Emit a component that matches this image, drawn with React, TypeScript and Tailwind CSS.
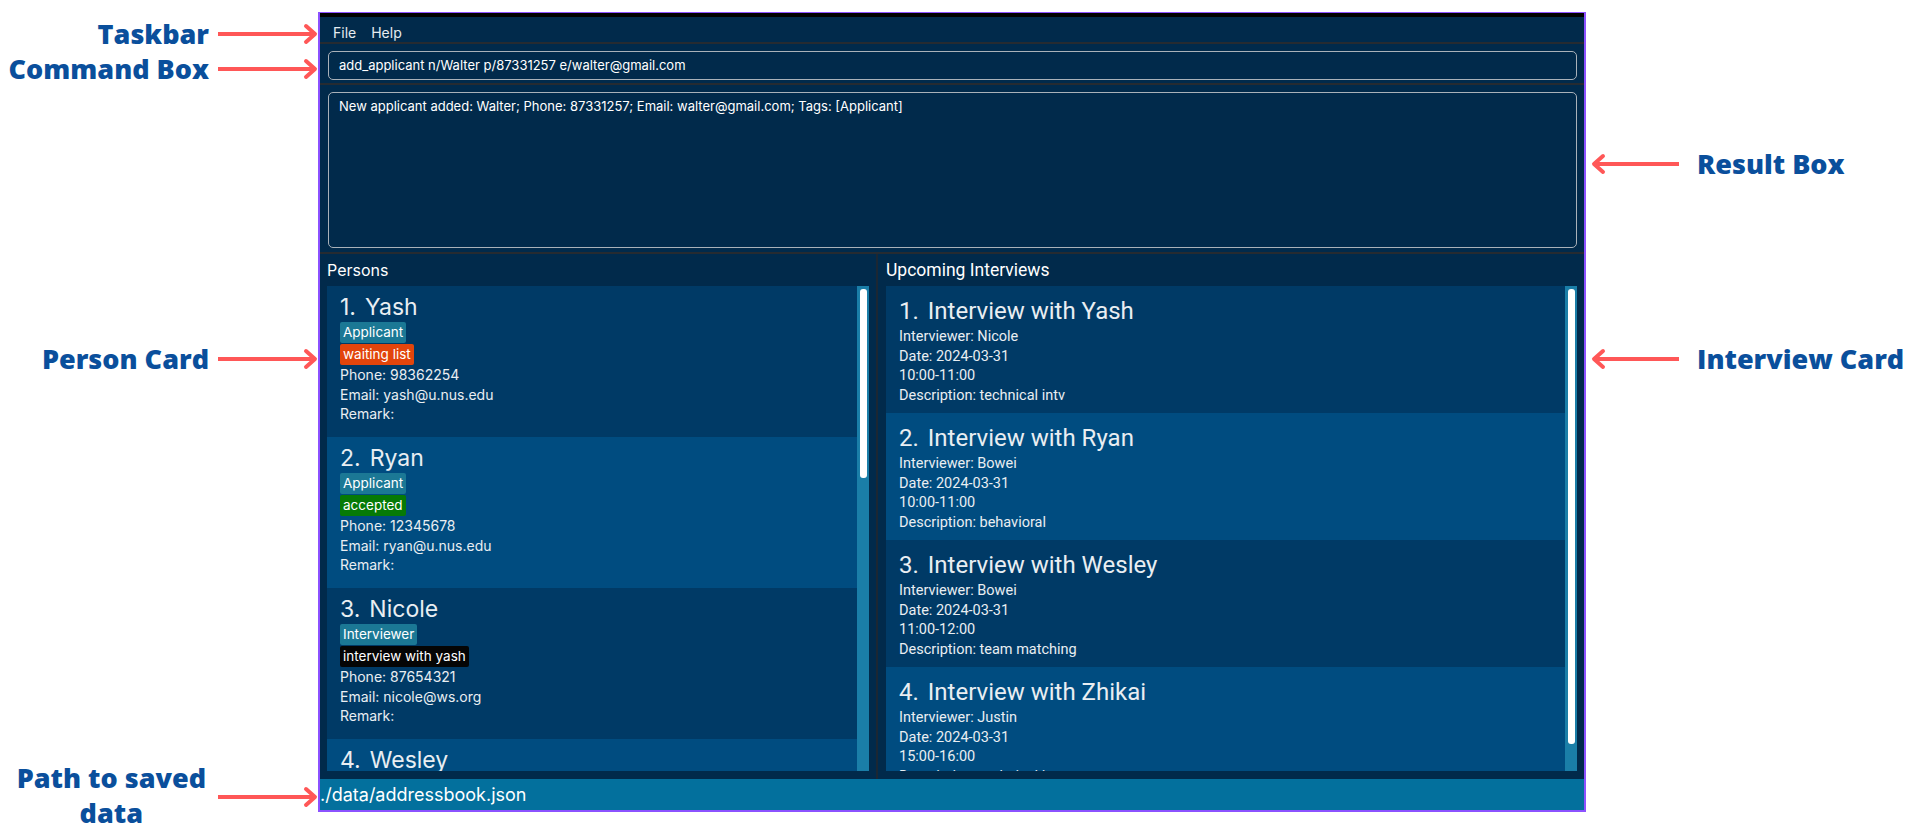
import React from "react";

const ui = { fontFamily: "Inter, 'Noto Sans', sans-serif" };
const cond = { fontFamily: "Roboto, 'Noto Sans', sans-serif" };
const ann = { fontFamily: "'Open Sans', 'Noto Sans', sans-serif" };

function ArrowRight({ w }: { w: number }) {
  return (
    <svg width={w} height="22" viewBox={`0 0 ${w} 22`}>
      <line x1="0" y1="11" x2={w - 3} y2="11" stroke="#ff5757" strokeWidth="4" />
      <polyline points={`${w - 12},3 ${w - 3},11 ${w - 12},19`} fill="none" stroke="#ff5757" strokeWidth="4" strokeLinecap="round" strokeLinejoin="round" />
    </svg>
  );
}
function ArrowLeft({ w }: { w: number }) {
  return (
    <svg width={w} height="22" viewBox={`0 0 ${w} 22`}>
      <line x1="3" y1="11" x2={w} y2="11" stroke="#ff5757" strokeWidth="4" />
      <polyline points="12,3 3,11 12,19" fill="none" stroke="#ff5757" strokeWidth="4" strokeLinecap="round" strokeLinejoin="round" />
    </svg>
  );
}

function LeftLabel({ top, children }: { top: number; children: React.ReactNode }) {
  return (
    <div className="absolute right-0 flex items-center" style={{ top }}>
      <div className="text-right text-[27px] font-extrabold leading-[34px] text-[#0a4f9c]" style={ann}>{children}</div>
      <div className="ml-[9px]"><ArrowRight w={100} /></div>
    </div>
  );
}
function RightLabel({ top, children }: { top: number; children: React.ReactNode }) {
  return (
    <div className="absolute left-0 flex items-center" style={{ top }}>
      <div className="ml-[5px]"><ArrowLeft w={88} /></div>
      <div className="ml-[18px] text-[27px] font-extrabold leading-[34px] text-[#0a4f9c]" style={ann}>{children}</div>
    </div>
  );
}

type Tag = { t: string; c: string };
type Person = { n: string; tags: Tag[]; phone: string; email: string };

const persons: Person[] = [
  { n: "Yash", tags: [{ t: "Applicant", c: "bg-[#1b7895]" }, { t: "waiting list", c: "bg-[#e2450c]" }], phone: "98362254", email: "yash@u.nus.edu" },
  { n: "Ryan", tags: [{ t: "Applicant", c: "bg-[#1b7895]" }, { t: "accepted", c: "bg-[#067a06]" }], phone: "12345678", email: "ryan@u.nus.edu" },
  { n: "Nicole", tags: [{ t: "Interviewer", c: "bg-[#1b7895]" }, { t: "interview with yash", c: "bg-[#050505]" }], phone: "87654321", email: "nicole@ws.org" },
  { n: "Wesley", tags: [{ t: "Interviewer", c: "bg-[#1b7895]" }], phone: "11112222", email: "wesley@ws.org" },
];

const interviews = [
  { n: "Yash", by: "Nicole", time: "10:00-11:00", d: "technical intv" },
  { n: "Ryan", by: "Bowei", time: "10:00-11:00", d: "behavioral" },
  { n: "Wesley", by: "Bowei", time: "11:00-12:00", d: "team matching" },
  { n: "Zhikai", by: "Justin", time: "15:00-16:00", d: "technical intv" },
];

function PersonCard({ p, i }: { p: Person; i: number }) {
  return (
    <div className={`h-[151px] shrink-0 pl-[13px] pt-[7px] text-[#e9eef2] ${i % 2 === 0 ? "bg-[#003a66]" : "bg-[#004c80]"}`} style={ui}>
      <div className="flex h-[28px] items-center gap-[9px] text-[23px]">
        <span>{i + 1}.</span>
        <span>{p.n}</span>
      </div>
      <div className="flex flex-col items-start gap-[1px] pt-[1px]">
        {p.tags.map((t) => (
          <span key={t.t} className={`h-[21px] rounded-[2px] px-[3px] text-[13.5px] leading-[21px] text-white ${t.c}`}>{t.t}</span>
        ))}
      </div>
      <div className="text-[14px] leading-[19.5px]">
        <div>Phone: {p.phone}</div>
        <div>Email: {p.email}</div>
        <div>Remark:</div>
      </div>
    </div>
  );
}

function InterviewCard({ v, i }: { v: (typeof interviews)[number]; i: number }) {
  return (
    <div className={`h-[127px] shrink-0 pl-[13px] pt-[9px] text-[#e9eef2] ${i % 2 === 0 ? "bg-[#003a66]" : "bg-[#004c80]"}`} style={cond}>
      <div className="flex h-[32px] items-center gap-[9px] text-[24px]">
        <span>{i + 1}.</span>
        <span>Interview with {v.n}</span>
      </div>
      <div className="text-[14.5px] leading-[19.5px]">
        <div>Interviewer: {v.by}</div>
        <div>Date: 2024-03-31</div>
        <div>{v.time}</div>
        <div>Description: {v.d}</div>
      </div>
    </div>
  );
}

function Scrollbar({ thumb }: { thumb: number }) {
  return (
    <div className="w-[12px] shrink-0 bg-[#1a7ea8] pt-[3px]">
      <div className="mx-auto w-[7px] rounded-[3px] bg-white" style={{ height: thumb }} />
    </div>
  );
}

export default function App() {
  return (
    <div className="flex h-[839px] w-[1906px] overflow-hidden bg-white">
      <div className="relative w-[318px] shrink-0">
        <LeftLabel top={17}>Taskbar</LeftLabel>
        <LeftLabel top={52}>Command Box</LeftLabel>
        <LeftLabel top={342}>Person Card</LeftLabel>
        <div className="absolute right-0 top-[760px] flex items-center">
          <div className="text-center text-[27px] font-extrabold leading-[35px] text-[#0a4f9c]" style={ann}>
            Path to saved<br />data
          </div>
          <div className="ml-[12px] mt-[4px]"><ArrowRight w={100} /></div>
        </div>
      </div>

      <div className="mt-[12px] flex h-[800px] w-[1268px] shrink-0 flex-col border-2 border-t-[1px] border-[#8c52ff] bg-[#012a4b]">
        <div className="h-[4px] bg-black" />
        <div className="flex h-[25px] items-center gap-[15px] pl-[13px] pt-[5px] text-[14px] text-[#e6ecf0]" style={ui}>
          <span>File</span>
          <span>Help</span>
        </div>
        <div className="h-[2px] bg-[#262b31]" />
        <div className="pb-[3px] pl-[8px] pr-[7px] pt-[7px]">
          <div className="flex h-[29px] items-center rounded-[5px] border border-[#a9b1b9] pl-[10px] text-[13px] text-white" style={ui}>
            add_applicant n/Walter p/87331257 e/walter@gmail.com
          </div>
        </div>
        <div className="h-[2px] bg-[#262b31]" />
        <div className="pb-[4px] pl-[8px] pr-[7px] pt-[7px]">
          <div className="h-[156px] rounded-[5px] border border-[#a9b1b9] pl-[10px] pt-[4px] text-[13px] text-white" style={ui}>
            New applicant added: Walter; Phone: 87331257; Email: walter@gmail.com; Tags: [Applicant]
          </div>
        </div>
        <div className="h-[2px] bg-[#262b31]" />
        <div className="flex h-[525px]">
          <div className="flex w-[556px] flex-col pb-[8px] pl-[7px] pr-[7px]">
            <div className="flex h-[32px] items-center text-[16px] text-white" style={ui}>Persons</div>
            <div className="flex min-h-0 flex-1">
              <div className="flex min-w-0 flex-1 flex-col overflow-hidden">
                {persons.map((p, i) => <PersonCard key={p.n} p={p} i={i} />)}
              </div>
              <Scrollbar thumb={189} />
            </div>
          </div>
          <div className="w-[2px] bg-[#1c2733]" />
          <div className="flex flex-1 flex-col pb-[8px] pl-[8px] pr-[7px]">
            <div className="flex h-[32px] items-center text-[17.5px] text-white" style={cond}>Upcoming Interviews</div>
            <div className="flex min-h-0 flex-1">
              <div className="flex min-w-0 flex-1 flex-col overflow-hidden">
                {interviews.map((v, i) => <InterviewCard key={v.n} v={v} i={i} />)}
              </div>
              <Scrollbar thumb={455} />
            </div>
          </div>
        </div>
        <div className="flex flex-1 items-center bg-[#03709d] text-[18px] text-white" style={ui}>
          ./data/addressbook.json
        </div>
      </div>

      <div className="relative flex-1">
        <RightLabel top={147}>Result Box</RightLabel>
        <RightLabel top={342}>Interview Card</RightLabel>
      </div>
    </div>
  );
}
